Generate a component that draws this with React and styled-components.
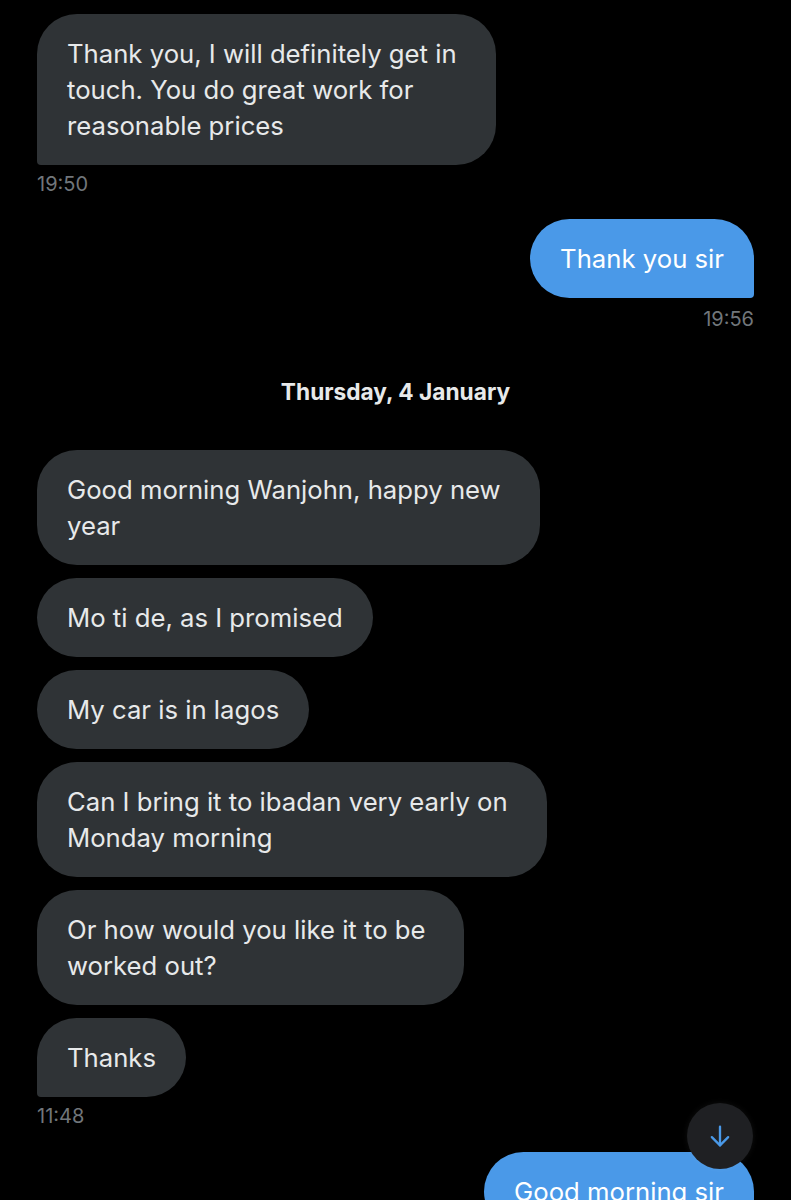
import React from "react";
import styled, { createGlobalStyle } from "styled-components";

const GlobalStyle = createGlobalStyle`
  html, body { margin: 0; padding: 0; background: #000; }
  body { font-family: Inter, "Noto Sans", sans-serif; -webkit-font-smoothing: antialiased; }
`;

const Screen = styled.div`
  position: relative;
  width: 791px;
  height: 1200px;
  overflow: hidden;
  background: #000;
`;

const Thread = styled.div`
  display: flex;
  flex-direction: column;
  padding: 14px 37px 0;
`;

const Group = styled.section`
  display: flex;
  flex-direction: column;
  align-items: ${p => (p.$sent ? "flex-end" : "flex-start")};
  gap: 13px;
  margin-top: ${p => p.$gap || 0}px;
`;

const Bubble = styled.div`
  box-sizing: border-box;
  padding: 21.5px ${p => (p.$multi ? 39 : 30)}px 21.5px 30px;
  font-size: 25.7px;
  line-height: 36px;
  white-space: nowrap;
  color: ${p => (p.$sent ? "#ffffff" : "#e7e9ea")};
  background: ${p => (p.$sent ? "#4a99e8" : "#2f3336")};
  border-radius: 40px;
  ${p => p.$last && !p.$sent && "border-bottom-left-radius: 4px;"}
  ${p => p.$last && p.$sent && "border-bottom-right-radius: 4px;"}
`;

const Time = styled.div`
  margin-top: ${p => (p.$sent ? -4 : -6)}px;
  font-size: 20px;
  line-height: 24px;
  color: #71767b;
`;

const DateDivider = styled.div`
  margin-top: 47px;
  text-align: center;
  font-size: 22.7px;
  line-height: 28px;
  font-weight: 700;
  color: #e7e9ea;
`;

const ScrollButton = styled.button`
  position: absolute;
  right: 38px;
  top: 1103px;
  width: 66px;
  height: 66px;
  border: none;
  border-radius: 50%;
  background: #1f2023;
  display: flex;
  align-items: center;
  justify-content: center;
  padding: 0;
  box-shadow: 0 0 6px rgba(255, 255, 255, 0.06);
  z-index: 2;
`;

const groups = [
  {
    sent: false,
    gap: 0,
    time: "19:50",
    messages: [["Thank you, I will definitely get in", "touch. You do great work for", "reasonable prices"]],
  },
  { sent: true, gap: 23, time: "19:56", messages: [["Thank you sir"]] },
  { divider: "Thursday, 4 January" },
  {
    sent: false,
    gap: 44,
    time: "11:48",
    messages: [
      ["Good morning Wanjohn, happy new", "year"],
      ["Mo ti de, as I promised"],
      ["My car is in lagos"],
      ["Can I bring it to ibadan very early on", "Monday morning"],
      ["Or how would you like it to be", "worked out?"],
      ["Thanks"],
    ],
  },
  { sent: true, gap: 24, messages: [["Good morning sir"]] },
];

function Lines({ lines }) {
  return lines.map((l, i) => (
    <React.Fragment key={i}>
      {i > 0 && <br />}
      {l}
    </React.Fragment>
  ));
}

export default function App() {
  return (
    <Screen>
      <GlobalStyle />
      <Thread>
        {groups.map((g, gi) =>
          g.divider ? (
            <DateDivider key={gi}>{g.divider}</DateDivider>
          ) : (
            <Group key={gi} $sent={g.sent} $gap={g.gap}>
              {g.messages.map((m, mi) => (
                <Bubble
                  key={mi}
                  $sent={g.sent}
                  $multi={m.length > 1}
                  $last={mi === g.messages.length - 1}
                >
                  <Lines lines={m} />
                </Bubble>
              ))}
              {g.time && <Time $sent={g.sent}>{g.time}</Time>}
            </Group>
          )
        )}
      </Thread>
      <ScrollButton aria-label="Scroll to bottom">
        <svg width="28" height="28" viewBox="0 0 24 24" fill="none" stroke="#4a99e8" strokeWidth="2" strokeLinecap="round" strokeLinejoin="round">
          <line x1="12" y1="4" x2="12" y2="20" />
          <polyline points="5 13 12 20 19 13" />
        </svg>
      </ScrollButton>
    </Screen>
  );
}
